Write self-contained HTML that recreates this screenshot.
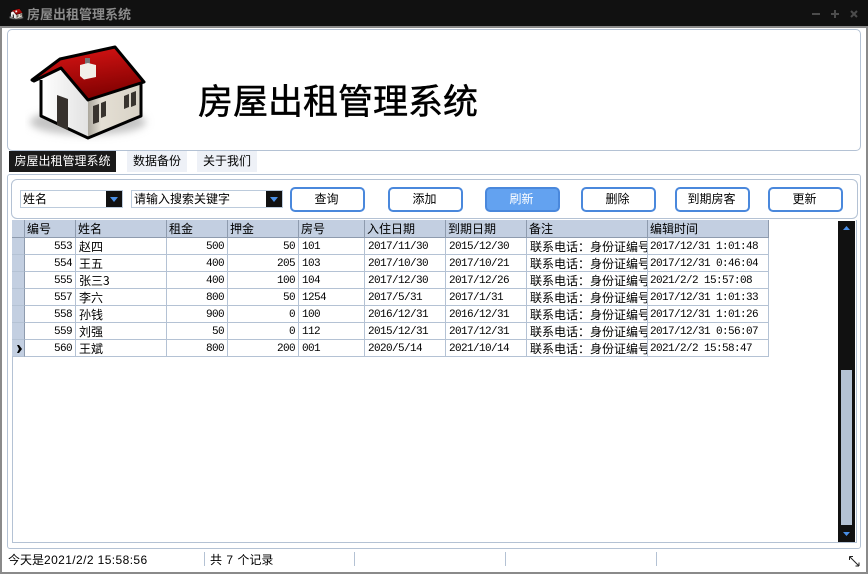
<!DOCTYPE html>
<html lang="zh">
<head>
<meta charset="utf-8">
<title>房屋出租管理系统</title>
<style>
html,body{margin:0;padding:0}
body{width:868px;height:574px;position:relative;overflow:hidden;background:#fff;font:12px/17px "WenQuanYi Zen Hei","Liberation Sans","Noto Sans CJK SC",sans-serif;color:#000}
div{position:absolute;box-sizing:border-box;white-space:nowrap}
.btn{top:187px;width:75px;height:25px;border:2px solid #4a88dc;border-radius:5px;background:#fff;text-align:center;line-height:21px;padding-right:2px}
.sel{top:190px;height:18px;border:1px solid #bccbdc;background:#fff;line-height:16px;padding-left:2px}
.arr{position:absolute;top:0;right:0;width:16px;height:16px;background:#111}
.arr:after{content:"";position:absolute;left:4px;top:6px;border:4px solid transparent;border-top:5px solid #4a90e8;border-bottom:0}
.tab{top:151px;height:21px;text-align:center;line-height:20px;background:#eef1f7}
.h{top:220px;height:18px;background:#c3cfe1;border-right:1px solid #8e9bae;border-bottom:1px solid #8e9bae;padding:1px 0 0 2px;line-height:17px;overflow:hidden}
.c{height:17px;border-right:1px solid #b4c2d4;border-bottom:1px solid #b4c2d4;padding:0 3px 0 3px;line-height:19px;overflow:hidden;font-family:"Liberation Mono","WenQuanYi Zen Hei",monospace;font-size:11px;letter-spacing:-.6px}
.c b{font:12px/17px "WenQuanYi Zen Hei","Noto Sans CJK SC",sans-serif;letter-spacing:0;display:block}
.r{text-align:right}
.rh{left:12px;width:13px;height:17px;background:#c3cfe1;border-right:1px solid #8e9bae;border-bottom:1px solid #b4c2d4}
.sd{top:552px;width:1px;height:14px;background:#b4c2d4}
.n{letter-spacing:.4px}
</style>
</head>
<body>
<svg width="0" height="0" style="position:absolute">
<defs>
<linearGradient id="rf" x1="0.3" y1="0" x2="0.6" y2="1"><stop offset="0" stop-color="#d81414"/><stop offset="1" stop-color="#7c0000"/></linearGradient>
<linearGradient id="rw" x1="0" y1="0" x2="1" y2="0"><stop offset="0" stop-color="#aaa69c"/><stop offset="0.25" stop-color="#e4dfd4"/><stop offset="1" stop-color="#d8d2c6"/></linearGradient>
<linearGradient id="lw" x1="0" y1="0" x2="1" y2="0"><stop offset="0" stop-color="#fff"/><stop offset="1" stop-color="#e2e2e2"/></linearGradient>
<filter id="bl" x="-20%" y="-50%" width="140%" height="200%"><feGaussianBlur stdDeviation="4"/></filter>
<symbol id="house" viewBox="25 42 130 102">
<ellipse cx="88" cy="122" rx="58" ry="13" fill="#c4c4c4" filter="url(#bl)"/>
<path d="M41 80V116L88 138V100L61 67Z" fill="url(#lw)"/>
<path d="M88 138L141 116V82L88 100Z" fill="url(#rw)"/>
<path d="M41 80V116L88 138L141 116V82" fill="none" stroke="#000" stroke-width="3" stroke-linejoin="round"/>
<path d="M57 95L68 99V130L57 125Z" fill="#35302c"/>
<path d="M93 106L99 104V122L93 124ZM101 103L106 101V116L101 118ZM124 96L129 94V107L124 109ZM131 93L136 91V105L131 107Z" fill="#38332e"/>
<path d="M32 80L60 59L115 47L144 82L88 100L61 68L34 81Z" fill="url(#rf)" stroke="#000" stroke-width="3" stroke-linejoin="round"/>
<path d="M85 58H90V67H85Z" fill="#777"/>
<path d="M80 65L88 63L96 65V77L84 79.500L80 76Z" fill="#f2efe8"/>
</symbol>
</defs>
</svg>

<!-- window frame -->
<div style="left:0;top:0;width:868px;height:26px;background:#111"></div>
<div style="left:0;top:26px;width:868px;height:2px;background:#8a8a8a"></div>
<div style="left:0;top:26px;width:2px;height:548px;background:#8a8a8a"></div>
<div style="left:866px;top:26px;width:2px;height:548px;background:#8a8a8a"></div>
<div style="left:0;top:572px;width:868px;height:2px;background:#8a8a8a"></div>

<!-- title bar -->
<svg style="position:absolute;left:9px;top:7px" width="15" height="14"><use href="#house" width="15" height="14"/></svg>
<div style="left:27px;top:5px;font:bold 13px/18px 'WenQuanYi Zen Hei','Noto Sans CJK SC',sans-serif;color:#8c8c8c">房屋出租管理系统</div>
<svg style="position:absolute;left:810px;top:8px" width="50" height="12">
<path d="M2 6H10M25 2V10M21 6H29M41 3L47 9M47 3L41 9" stroke="#4c4c4c" stroke-width="2" fill="none"/>
</svg>

<!-- header panel -->
<div style="left:7px;top:29px;width:854px;height:122px;border:1px solid #b4c2d4;border-radius:5px;background:#fff"></div>
<svg style="position:absolute;left:25px;top:42px" width="130" height="102"><use href="#house" width="130" height="102"/></svg>
<div style="left:198px;top:79px;font:35px/42px 'WenQuanYi Zen Hei','Noto Sans CJK SC',sans-serif;-webkit-text-stroke:.5px #000">房屋出租管理系统</div>

<!-- tabs -->
<div class="tab" style="left:9px;width:107px;background:#1a1a1a;color:#fff">房屋出租管理系统</div>
<div class="tab" style="left:127px;width:60px">数据备份</div>
<div class="tab" style="left:197px;width:60px">关于我们</div>

<!-- main panel -->
<div style="left:7px;top:174px;width:854px;height:375px;border:1px solid #b4c2d4;border-radius:3px"></div>
<div style="left:11px;top:179px;width:847px;height:40px;border:1px solid #b4c2d4;border-radius:6px"></div>

<div class="sel" style="left:20px;width:103px">姓名<span class="arr"></span></div>
<div class="sel" style="left:131px;width:152px">请输入搜索关键字<span class="arr"></span></div>

<div class="btn" style="left:290px">查询</div>
<div class="btn" style="left:388px">添加</div>
<div class="btn" style="left:485px;background:#63a2f0;color:#fff">刷新</div>
<div class="btn" style="left:581px">删除</div>
<div class="btn" style="left:675px">到期房客</div>
<div class="btn" style="left:768px">更新</div>

<!-- grid frame -->
<div style="left:12px;top:220px;width:845px;height:323px;border-left:1px solid #b4c2d4;border-bottom:1px solid #b4c2d4;border-right:1px solid #b4c2d4"></div>

<!-- grid header -->
<div class="h" style="left:12px;width:13px"></div>
<div class="h" style="left:25px;width:51px">编号</div>
<div class="h" style="left:76px;width:91px">姓名</div>
<div class="h" style="left:167px;width:61px">租金</div>
<div class="h" style="left:228px;width:71px">押金</div>
<div class="h" style="left:299px;width:66px">房号</div>
<div class="h" style="left:365px;width:81px">入住日期</div>
<div class="h" style="left:446px;width:81px">到期日期</div>
<div class="h" style="left:527px;width:121px">备注</div>
<div class="h" style="left:648px;width:121px">编辑时间</div>

<!-- row 1 -->
<div class="rh" style="top:238px"></div>
<div class="c r" style="left:25px;width:51px;top:238px">553</div>
<div class="c" style="left:76px;width:91px;top:238px"><b>赵四</b></div>
<div class="c r" style="left:167px;width:61px;top:238px">500</div>
<div class="c r" style="left:228px;width:71px;top:238px">50</div>
<div class="c" style="left:299px;width:66px;top:238px">101</div>
<div class="c" style="left:365px;width:81px;top:238px">2017/11/30</div>
<div class="c" style="left:446px;width:81px;top:238px">2015/12/30</div>
<div class="c" style="left:527px;width:121px;top:238px"><b>联系电话：身份证编号</b></div>
<div class="c" style="left:648px;width:121px;top:238px;padding-left:2px">2017/12/31 1:01:48</div>
<!-- row 2 -->
<div class="rh" style="top:255px"></div>
<div class="c r" style="left:25px;width:51px;top:255px">554</div>
<div class="c" style="left:76px;width:91px;top:255px"><b>王五</b></div>
<div class="c r" style="left:167px;width:61px;top:255px">400</div>
<div class="c r" style="left:228px;width:71px;top:255px">205</div>
<div class="c" style="left:299px;width:66px;top:255px">103</div>
<div class="c" style="left:365px;width:81px;top:255px">2017/10/30</div>
<div class="c" style="left:446px;width:81px;top:255px">2017/10/21</div>
<div class="c" style="left:527px;width:121px;top:255px"><b>联系电话：身份证编号</b></div>
<div class="c" style="left:648px;width:121px;top:255px;padding-left:2px">2017/12/31 0:46:04</div>
<!-- row 3 -->
<div class="rh" style="top:272px"></div>
<div class="c r" style="left:25px;width:51px;top:272px">555</div>
<div class="c" style="left:76px;width:91px;top:272px"><b>张三3</b></div>
<div class="c r" style="left:167px;width:61px;top:272px">400</div>
<div class="c r" style="left:228px;width:71px;top:272px">100</div>
<div class="c" style="left:299px;width:66px;top:272px">104</div>
<div class="c" style="left:365px;width:81px;top:272px">2017/12/30</div>
<div class="c" style="left:446px;width:81px;top:272px">2017/12/26</div>
<div class="c" style="left:527px;width:121px;top:272px"><b>联系电话：身份证编号</b></div>
<div class="c" style="left:648px;width:121px;top:272px;padding-left:2px">2021/2/2 15:57:08</div>
<!-- row 4 -->
<div class="rh" style="top:289px"></div>
<div class="c r" style="left:25px;width:51px;top:289px">557</div>
<div class="c" style="left:76px;width:91px;top:289px"><b>李六</b></div>
<div class="c r" style="left:167px;width:61px;top:289px">800</div>
<div class="c r" style="left:228px;width:71px;top:289px">50</div>
<div class="c" style="left:299px;width:66px;top:289px">1254</div>
<div class="c" style="left:365px;width:81px;top:289px">2017/5/31</div>
<div class="c" style="left:446px;width:81px;top:289px">2017/1/31</div>
<div class="c" style="left:527px;width:121px;top:289px"><b>联系电话：身份证编号</b></div>
<div class="c" style="left:648px;width:121px;top:289px;padding-left:2px">2017/12/31 1:01:33</div>
<!-- row 5 -->
<div class="rh" style="top:306px"></div>
<div class="c r" style="left:25px;width:51px;top:306px">558</div>
<div class="c" style="left:76px;width:91px;top:306px"><b>孙钱</b></div>
<div class="c r" style="left:167px;width:61px;top:306px">900</div>
<div class="c r" style="left:228px;width:71px;top:306px">0</div>
<div class="c" style="left:299px;width:66px;top:306px">100</div>
<div class="c" style="left:365px;width:81px;top:306px">2016/12/31</div>
<div class="c" style="left:446px;width:81px;top:306px">2016/12/31</div>
<div class="c" style="left:527px;width:121px;top:306px"><b>联系电话：身份证编号</b></div>
<div class="c" style="left:648px;width:121px;top:306px;padding-left:2px">2017/12/31 1:01:26</div>
<!-- row 6 -->
<div class="rh" style="top:323px"></div>
<div class="c r" style="left:25px;width:51px;top:323px">559</div>
<div class="c" style="left:76px;width:91px;top:323px"><b>刘强</b></div>
<div class="c r" style="left:167px;width:61px;top:323px">50</div>
<div class="c r" style="left:228px;width:71px;top:323px">0</div>
<div class="c" style="left:299px;width:66px;top:323px">112</div>
<div class="c" style="left:365px;width:81px;top:323px">2015/12/31</div>
<div class="c" style="left:446px;width:81px;top:323px">2017/12/31</div>
<div class="c" style="left:527px;width:121px;top:323px"><b>联系电话：身份证编号</b></div>
<div class="c" style="left:648px;width:121px;top:323px;padding-left:2px">2017/12/31 0:56:07</div>
<!-- row 7 -->
<div class="rh" style="top:340px"></div>
<svg style="position:absolute;left:17px;top:345px" width="5" height="8"><path d="M0 0H2L5 4L2 8H0L2 4Z" fill="#000"/></svg>
<div class="c r" style="left:25px;width:51px;top:340px">560</div>
<div class="c" style="left:76px;width:91px;top:340px"><b>王斌</b></div>
<div class="c r" style="left:167px;width:61px;top:340px">800</div>
<div class="c r" style="left:228px;width:71px;top:340px">200</div>
<div class="c" style="left:299px;width:66px;top:340px">001</div>
<div class="c" style="left:365px;width:81px;top:340px">2020/5/14</div>
<div class="c" style="left:446px;width:81px;top:340px">2021/10/14</div>
<div class="c" style="left:527px;width:121px;top:340px"><b>联系电话：身份证编号</b></div>
<div class="c" style="left:648px;width:121px;top:340px;padding-left:2px">2021/2/2 15:58:47</div>

<!-- scrollbar -->
<div style="left:838px;top:221px;width:17px;height:321px;background:#111"></div>
<div style="left:841px;top:370px;width:11px;height:155px;background:#b4c2d4"></div>
<svg style="position:absolute;left:842px;top:225px" width="9" height="6"><path d="M1 5H8L4.500 1Z" fill="#4a90e8"/></svg>
<svg style="position:absolute;left:842px;top:531px" width="9" height="6"><path d="M1 1H8L4.500 5Z" fill="#4a90e8"/></svg>

<!-- status bar -->
<div style="left:8px;top:552px;line-height:16px">今天是<span class="n">2021/2/2 15:58:56</span></div>
<div class="sd" style="left:204px"></div>
<div style="left:210px;top:552px;line-height:16px;word-spacing:1px">共 7 个记录</div>
<div class="sd" style="left:354px"></div>
<div class="sd" style="left:505px"></div>
<div class="sd" style="left:656px"></div>
<svg style="position:absolute;left:848px;top:555px" width="13" height="13"><path d="M1.500 1.500L11 11M1.500 1.500V5M1.500 1.500H5M11 11V7.500M11 11H7.500" stroke="#222" stroke-width="1" fill="none"/></svg>
</body>
</html>
